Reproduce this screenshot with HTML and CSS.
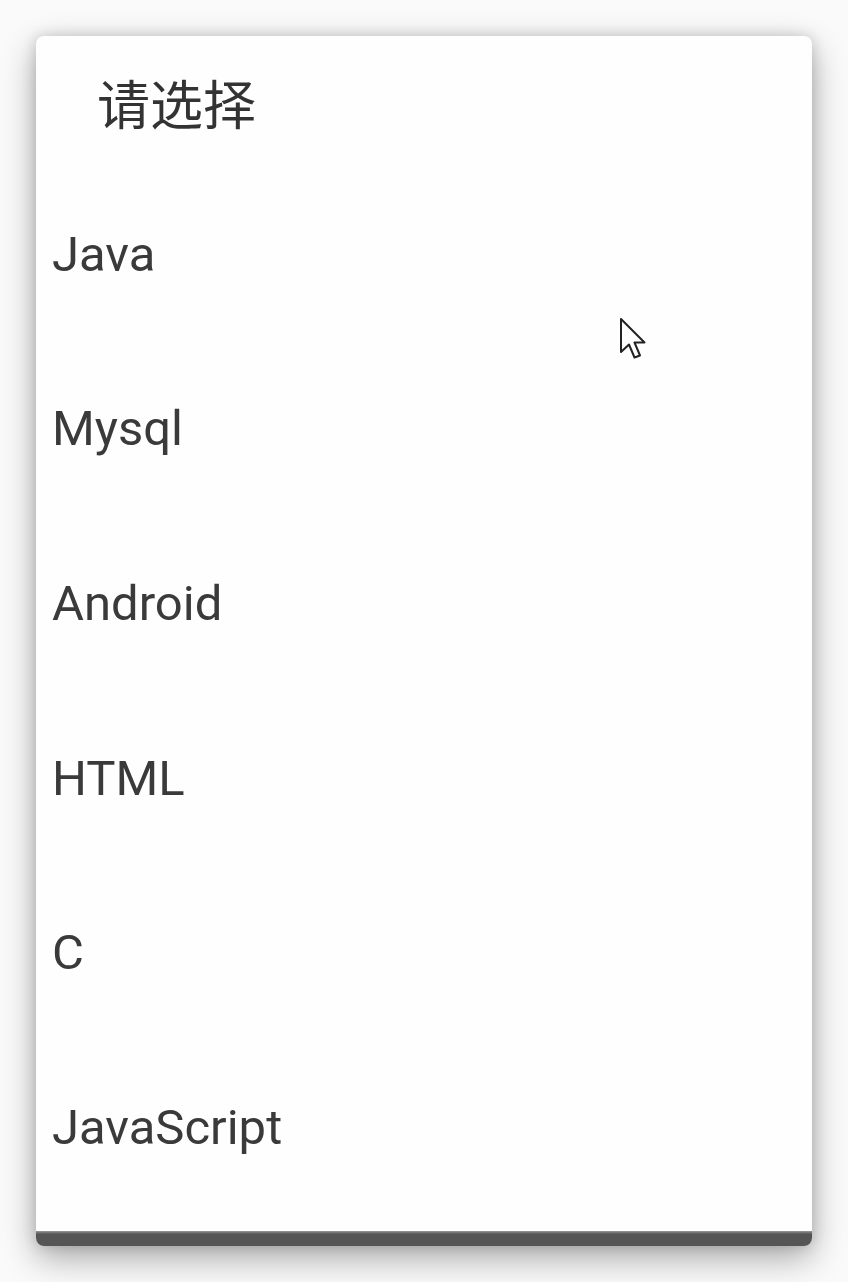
FILE: index.html
```html
<!DOCTYPE html>
<html lang="zh">
<head>
<meta charset="utf-8">
<link rel="stylesheet" href="styles.css">
</head>
<body>
<div class="dialog">
  <div class="title">请选择</div>
  <ul class="list">
    <li class="item">Java</li>
    <li class="item">Mysql</li>
    <li class="item">Android</li>
    <li class="item">HTML</li>
    <li class="item">C</li>
    <li class="item">JavaScript</li>
  </ul>
  <div class="spacer"></div>
  <div class="bar"></div>
  <svg class="cursor" width="32" height="48" viewBox="0 0 32 48">
    <path d="M2 2 L2 35 L10 27.5 L15.5 40.5 L21 38.5 L15.5 25.5 L25.5 25.5 Z" fill="#fff" stroke="#222" stroke-width="2" stroke-linejoin="round"/>
  </svg>
</div>
</body>
</html>
```
FILE: styles.css
```css
html, body {
  margin: 0;
  padding: 0;
  background: #fafafa;
}
body {
  width: 848px;
  height: 1282px;
  overflow: hidden;
  padding-top: 36px;
  box-sizing: border-box;
}
.dialog {
  position: relative;
  margin-left: 36px;
  width: 776px;
  height: 1210px;
  background: #fefefe;
  border-radius: 8px;
  overflow: hidden;
  display: flex;
  flex-direction: column;
  box-shadow: 0 12px 34px rgba(0, 0, 0, 0.33), 0 0 14px rgba(0, 0, 0, 0.15);
}
.title {
  flex: none;
  height: 131px;
  display: flex;
  align-items: center;
  padding-left: 61px;
  box-sizing: border-box;
  font-family: "Noto Sans CJK SC", "Noto Sans", sans-serif;
  font-size: 53px;
  color: #333;
}
.list {
  list-style: none;
  margin: 0;
  padding: 0;
  flex: none;
}
.item {
  height: 174.6px;
  display: flex;
  align-items: center;
  padding-left: 16px;
  font-family: Roboto, "Liberation Sans", sans-serif;
  font-size: 49px;
  color: #3a3a3a;
}
.spacer {
  flex: 1;
}
.bar {
  flex: none;
  height: 15px;
  background: linear-gradient(#9a9a9a, #555 3px, #555);
}
.cursor {
  position: absolute;
  left: 583px;
  top: 281px;
}
```
